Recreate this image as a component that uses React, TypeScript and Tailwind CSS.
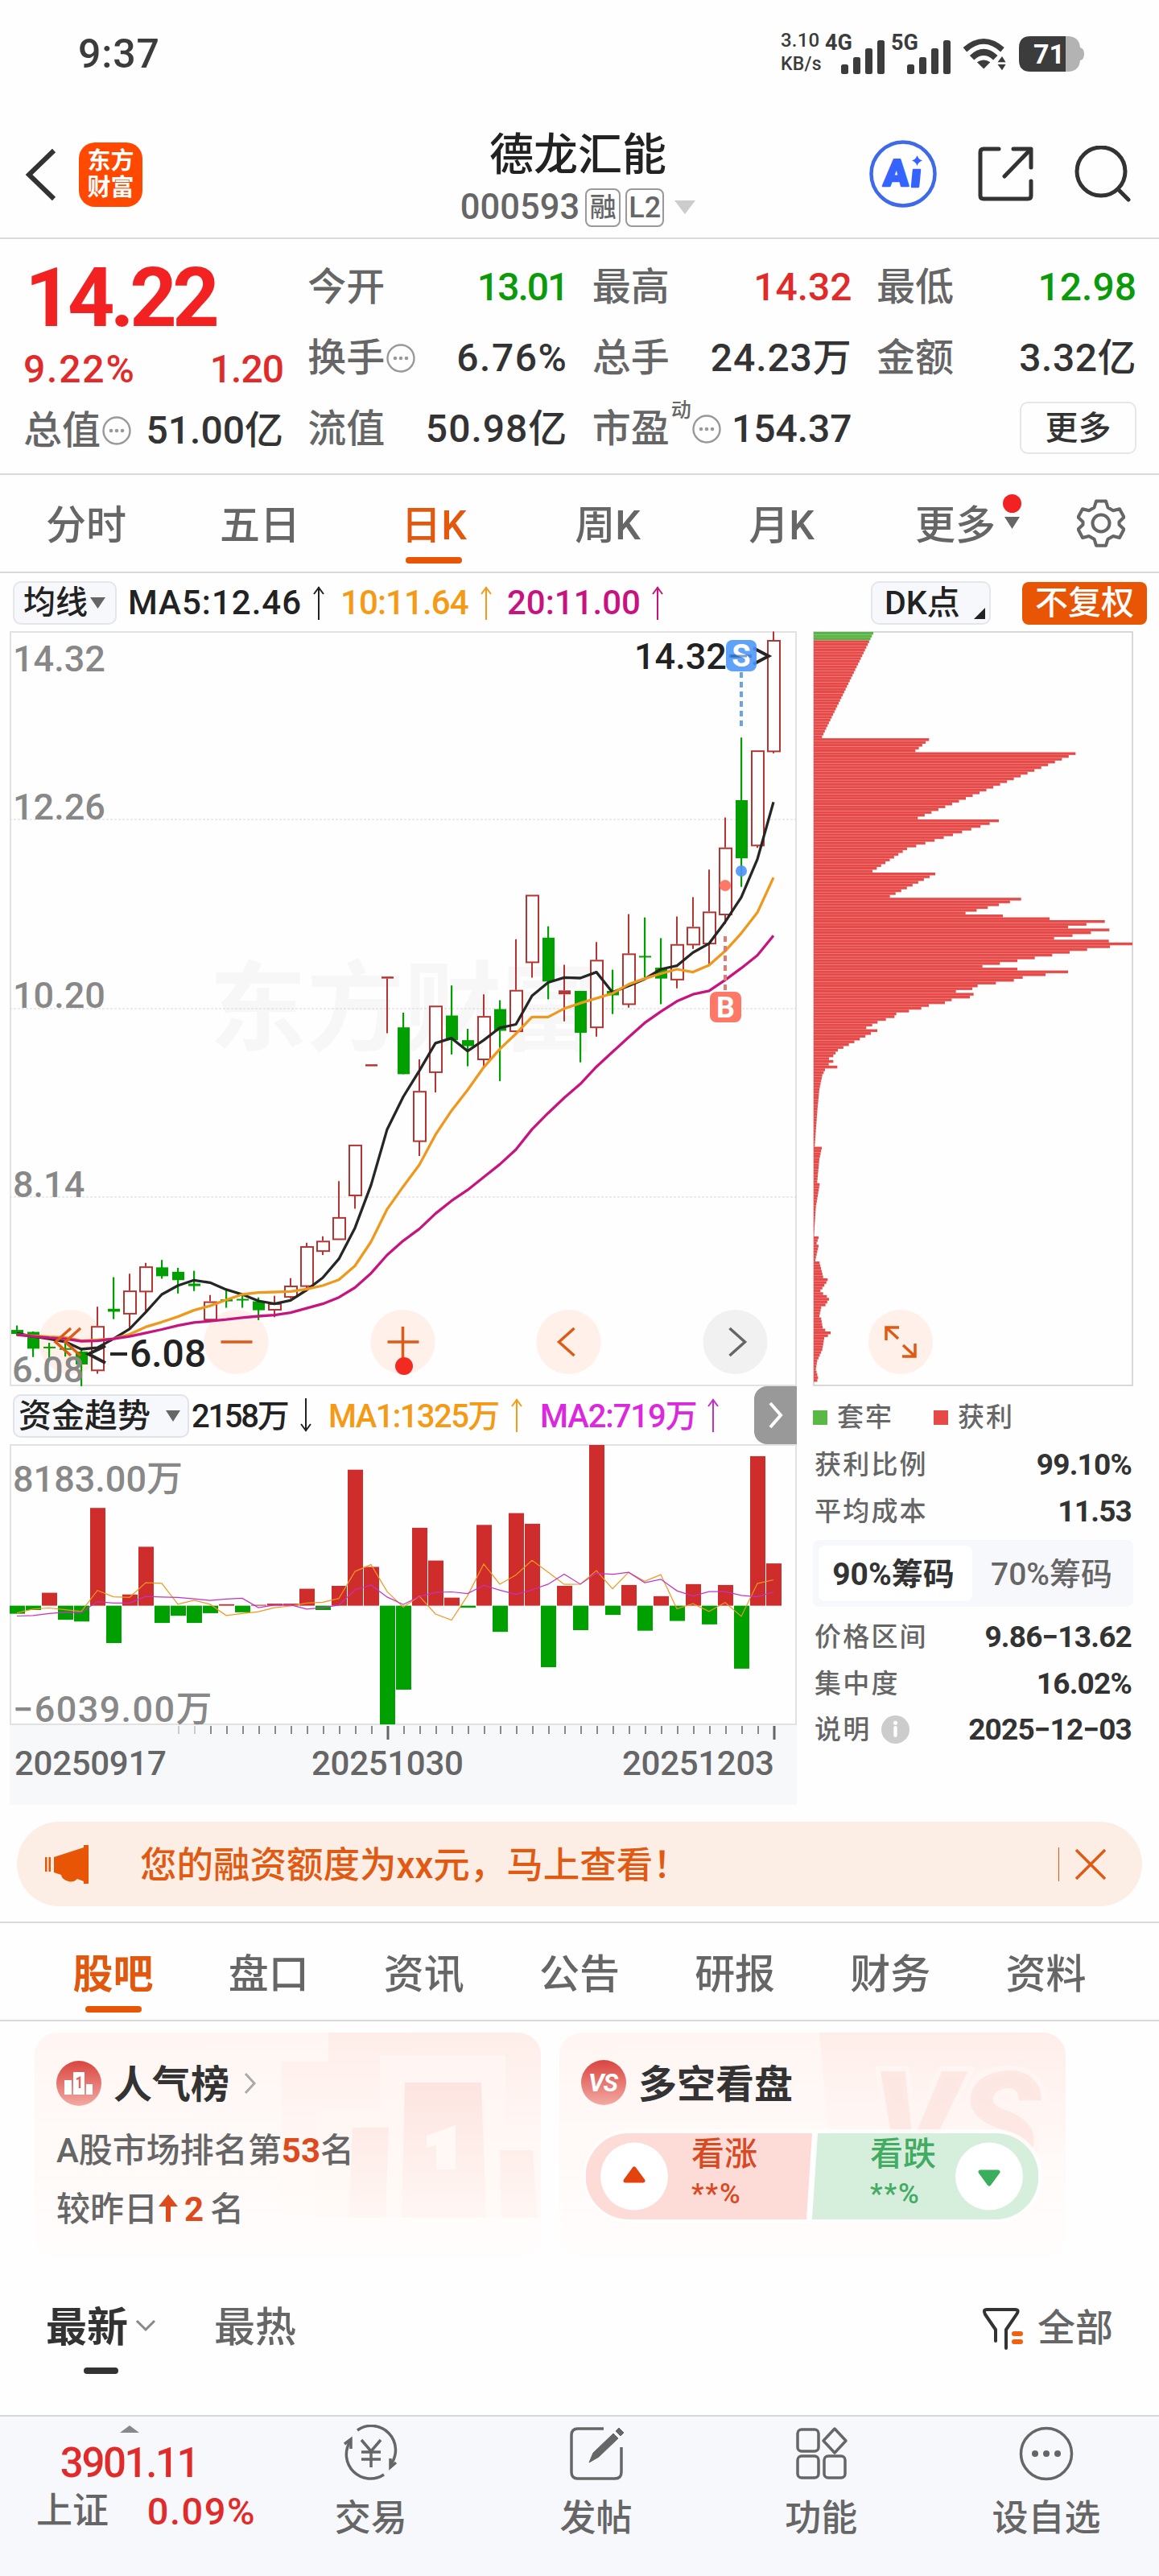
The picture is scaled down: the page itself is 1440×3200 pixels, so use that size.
import React from 'react';
import { clsx } from 'clsx';

type Candle = [dir: 'r' | 'g', high: number, top: number, bottom: number, low: number];

// vertical values are stored in raw plot units, 1531 units per price pane
const CANDLES: Candle[] = [
  ['g', 1415, 1424, 1432, 1436], ['g', 1427, 1428, 1462, 1479], ['g', 1450, 1458, 1461, 1485], ['g', 1450, 1461, 1464, 1478],
  ['g', 1462, 1468, 1494, 1538], ['r', 1377, 1416, 1506, 1513], ['g', 1317, 1381, 1387, 1402], ['r', 1310, 1344, 1391, 1420],
  ['r', 1288, 1295, 1346, 1388], ['g', 1282, 1297, 1315, 1320], ['g', 1298, 1306, 1323, 1350], ['g', 1304, 1330, 1335, 1345],
  ['r', 1353, 1366, 1403, 1405], ['g', 1344, 1362, 1366, 1379], ['g', 1350, 1361, 1364, 1379], ['g', 1358, 1366, 1384, 1404],
  ['r', 1355, 1370, 1383, 1398], ['r', 1319, 1334, 1357, 1360], ['r', 1247, 1254, 1335, 1340], ['r', 1234, 1243, 1264, 1272],
  ['r', 1122, 1195, 1240, 1241], ['r', 1048, 1048, 1151, 1178], ['r', 885, 885, 889, 889], ['r', 707, 707, 711, 822],
  ['g', 780, 810, 905, 905], ['r', 875, 939, 1041, 1071], ['r', 766, 766, 901, 942], ['g', 725, 786, 836, 865],
  ['g', 813, 836, 848, 889], ['r', 743, 787, 875, 890], ['g', 755, 773, 817, 919], ['r', 631, 734, 818, 818],
  ['r', 541, 541, 678, 709], ['g', 605, 628, 717, 753], ['r', 683, 735, 743, 798], ['g', 736, 736, 821, 881],
  ['r', 637, 673, 810, 829], ['g', 693, 736, 745, 783], ['r', 580, 660, 763, 770], ['g', 587, 665, 668, 710],
  ['g', 629, 689, 711, 763], ['r', 585, 641, 713, 731], ['r', 546, 606, 642, 651], ['r', 490, 575, 640, 686],
  ['r', 384, 445, 581, 600], ['g', 222, 349, 467, 525], ['r', 248, 248, 441, 446], ['r', 7, 24, 250, 254],
];

const MA5 = [1431, 1437, 1442, 1448, 1463, 1460, 1442, 1422, 1388, 1352, 1334, 1323, 1328, 1342, 1352, 1365, 1371, 1364, 1343, 1318, 1280, 1217, 1130, 1017, 951, 898, 842, 832, 858, 836, 811, 804, 746, 719, 709, 710, 698, 739, 726, 712, 692, 685, 658, 640, 596, 546, 469, 353];
const MA10 = [1434, 1436, 1438, 1439, 1446, 1444, 1442, 1433, 1418, 1408, 1397, 1384, 1375, 1363, 1352, 1348, 1347, 1346, 1341, 1334, 1322, 1294, 1245, 1179, 1133, 1089, 1028, 979, 937, 891, 854, 823, 789, 789, 772, 761, 751, 741, 723, 711, 701, 692, 698, 684, 655, 619, 577, 506];
const MA20 = [1434, 1437, 1440, 1442, 1447, 1446, 1442, 1437, 1430, 1423, 1415, 1409, 1406, 1403, 1399, 1396, 1394, 1389, 1380, 1371, 1358, 1338, 1309, 1272, 1243, 1219, 1188, 1162, 1140, 1114, 1088, 1058, 1017, 984, 953, 925, 890, 860, 830, 801, 778, 757, 743, 736, 714, 690, 664, 624];

// capital flow pane, zero line at 825
const FLOW = [853, 840, 780, 874, 880, 485, 955, 786, 620, 885, 860, 885, 851, 820, 848, 822, 818, 818, 766, 840, 756, 352, 690, 1238, 1117, 554, 668, 797, 832, 544, 916, 503, 540, 1039, 756, 910, 266, 857, 753, 912, 792, 878, 750, 890, 753, 1044, 305, 678];
const FLOW_MA1 = [850, 837, 833, 839, 845, 772, 794, 796, 745, 747, 820, 806, 820, 859, 852, 846, 832, 826, 816, 813, 800, 706, 682, 776, 830, 792, 854, 875, 790, 680, 750, 718, 667, 708, 751, 750, 703, 766, 709, 740, 717, 836, 818, 845, 814, 862, 748, 735];
const FLOW_MA2 = [861, 859, 852, 848, 849, 811, 816, 816, 793, 795, 796, 801, 807, 802, 799, 832, 823, 822, 837, 832, 823, 770, 753, 795, 821, 793, 779, 777, 783, 754, 771, 786, 770, 750, 715, 750, 712, 716, 709, 745, 733, 773, 791, 776, 776, 789, 794, 777];

// chip distribution outline: [y, bar end]
const CHIPS: [number, number][] = [
  [74, 314], [276, 123], [281, 522], [303, 471], [308, 1068], [435, 480], [439, 782], [489, 474], [494, 440], [538, 311],
  [543, 545], [588, 376], [592, 865], [620, 658], [625, 797], [630, 971], [635, 1177], [646, 1040], [652, 1194], [668, 988],
  [674, 1192], [679, 1280], [685, 1196], [691, 1111], [723, 721], [728, 851], [734, 1040], [739, 956], [745, 871], [750, 838],
  [756, 771], [761, 703], [767, 683], [772, 622], [777, 688], [783, 674], [789, 606], [794, 581], [799, 521], [805, 493],
  [810, 447], [816, 400], [821, 393], [827, 361], [832, 330], [838, 310], [843, 288], [848, 329], [854, 305], [887, 182],
  [898, 165], [903, 149], [908, 165], [914, 148], [919, 180], [925, 134], [935, 124], [960, 113], [1000, 106], [1072, 96],
  [1078, 122], [1100, 113], [1143, 105], [1148, 114], [1190, 100], [1248, 93], [1252, 110], [1263, 103], [1269, 110], [1296, 98],
  [1301, 114], [1329, 127], [1335, 144], [1340, 139], [1357, 117], [1362, 127], [1368, 141], [1373, 149], [1380, 136], [1390, 120],
  [1405, 113], [1410, 120], [1427, 125], [1433, 135], [1438, 155], [1444, 145], [1449, 131], [1470, 124], [1490, 105], [1510, 100],
  [1525, 108], [1533, 103],
];
const ROW_STEP = 5.45;

const chipRows = () => {
  const pts = CHIPS.map(([y, x]) => [Math.round((y - 74) / ROW_STEP), x]);
  const rows: number[] = [];
  for (let k = 0; k < pts.length - 1; k++) {
    const [i0, x0] = pts[k];
    const [i1, x1] = pts[k + 1];
    for (let i = i0; i < i1; i++) rows[i] = x0 + ((x1 - x0) * (i - i0)) / (i1 - i0);
  }
  return rows;
};

const cx = (i: number) => 9 + i * 20;
const py = (v: number) => (v - 6) * 0.6122;
const fy = (v: number) => (v - 266) / 2.8 + 1;
const line = (vals: number[], f: (v: number) => number) => vals.map((v, i) => `${cx(i)},${f(v).toFixed(1)}`).join(' ');

function Down({ className }: { className?: string }) {
  return (
    <svg viewBox="0 0 20 16" preserveAspectRatio="none" className={className} fill="currentColor">
      <path d="M0 0h20L10 16z" />
    </svg>
  );
}

function Arrow({ down, className }: { down?: boolean; className?: string }) {
  return (
    <svg viewBox="0 0 16 44" className={clsx('h-[44px] w-4 shrink-0', down && 'rotate-180', className)} fill="none" stroke="currentColor" strokeWidth="2">
      <path d="M8 2v41M2 11l6-8 6 8" />
    </svg>
  );
}

function Dots({ className }: { className?: string }) {
  return (
    <svg viewBox="0 0 36 36" className={clsx('h-9 w-9 shrink-0 text-[#999]', className)} fill="none" stroke="currentColor" strokeWidth="2.4">
      <circle cx="18" cy="18" r="16.5" />
      <g fill="currentColor" stroke="none">
        <circle cx="11" cy="18" r="2.3" />
        <circle cx="18" cy="18" r="2.3" />
        <circle cx="25" cy="18" r="2.3" />
      </g>
    </svg>
  );
}

function StatusBar() {
  const bars = [12, 21, 32, 42];
  return (
    <div className="flex h-[134px] items-center justify-between pl-[97px] pr-[92px] font-medium text-[#3c3c3c]">
      <div className="text-[50px] tracking-[0.8px]">9:37</div>
      <div className="flex items-center">
        <div className="w-[57px] pb-[5px] text-[24px] font-medium leading-[29px] tracking-[0.2px]">
          <div>3.10</div>
          <div className="text-[23px]">KB/s</div>
        </div>
        {['4G', '5G'].map(t => (
          <svg key={t} viewBox="0 0 73 54" className="mr-[9px] h-[54px] w-[73px] overflow-visible" fill="currentColor">
            <text x="-2" y="22" className="text-[27px] font-bold">{t}</text>
            {bars.map((h, b) => <rect key={h} x={18 + b * 15} y={52 - h} width="9" height={h} rx="2.500" />)}
          </svg>
        ))}
        <svg viewBox="0 0 60 46" className="ml-[3px] h-[46px] w-[60px] pt-1" fill="currentColor">
          <path d="M0 12Q28-12 56 12l-5 6Q28-3 5 18z" />
          <path d="M9 23q19-18 38 0l-6 6Q28 17 15 29z" />
          <path d="M28 41l-9-9q9-6 18 0z" />
          <path d="M47 32l6-8 5 8zM47 35h11l-5 8z" />
        </svg>
        <svg viewBox="0 0 82 44" className="ml-[12px] h-[44px] w-[82px]">
          <path d="M56 0h6q13 1 14 14 5 1 5 8t-5 8q-1 13-14 14h-6z" fill="#b3b3b3" />
          <path d="M14 0h44v44H14Q0 44 0 30V14Q0 0 14 0z" fill="#3c3c3c" />
          <text x="18" y="34" className="text-[34px] font-bold" fill="#fff">71</text>
        </svg>
      </div>
    </div>
  );
}

function Header() {
  return (
    <header className="grid h-[163px] grid-cols-[1fr_auto_1fr] items-center border-b-2 border-[#d9d9d9] pl-[31px] pr-[35px]">
      <div className="flex items-center gap-[27px] pt-1">
        <svg viewBox="0 0 40 66" className="h-[66px] w-10" fill="none" stroke="#333" strokeWidth="6">
          <path d="M36 3L5 33l31 30" />
        </svg>
        <div className="flex h-20 w-[79px] flex-col items-center justify-center rounded-[20px] bg-[#ff4800] text-[29px] font-bold leading-[33px] text-white">
          <span>东方</span>
          <span>财富</span>
        </div>
      </div>
      <div className="flex flex-col items-center pt-[18px]">
        <h1 className="text-[55px] font-medium leading-[68px] text-[#222]">德龙汇能</h1>
        <div className="flex h-[64px] items-center text-[43.500px] text-[#666]">
          <span>000593</span>
          <span className="ml-[7px] flex h-[48px] w-[44px] items-center justify-center rounded-lg border-2 border-[#999] text-[33px]">融</span>
          <span className="ml-[6px] flex h-[48px] w-[48px] items-center justify-center rounded-lg border-2 border-[#999] text-[36px]">L2</span>
          <Down className="ml-[13px] h-[17px] w-[26px] text-[#ccc]" />
        </div>
      </div>
      <div className="flex items-center justify-end pt-[2px]">
        <svg viewBox="0 0 84 84" className="h-[84px] w-[84px]">
          <circle cx="42" cy="42" r="39.500" fill="none" stroke="#3d69ea" strokeWidth="4.500" />
          <text transform="translate(17 57) skewX(-3)" className="text-[46px] font-black" fill="#3563ff" stroke="#3563ff" strokeWidth="2.500" strokeLinejoin="round">A</text>
          <path d="M55 37h8l-2 21h-8z" fill="#3563ff" stroke="#3563ff" strokeWidth="2.500" strokeLinejoin="round" />
          <path d="M59.500 19q1.500 5 6.500 6.500-5 1.500-6.500 6.500-1.500-5-6.500-6.500 5-1.500 6.500-6.500z" fill="#3563ff" />
        </svg>
        <svg viewBox="0 0 70 70" className="ml-[50px] h-[70px] w-[70px]" fill="none" stroke="#333" strokeWidth="5" strokeLinecap="round" strokeLinejoin="round">
          <path d="M27 4H8Q4 4 4 8v54q0 4 4 4h55q4 0 4-4V44M45 4h22v23M66 5L34 38" />
        </svg>
        <svg viewBox="0 0 70 70" className="ml-[51px] h-[70px] w-[70px]" fill="none" stroke="#333" strokeWidth="5" strokeLinecap="round">
          <circle cx="33" cy="32" r="30" />
          <path d="M55 55l12 12" />
        </svg>
      </div>
    </header>
  );
}

function Cell({ label, value, color = 'text-[#333]', dots, sup }: { label: string; value: string; color?: string; dots?: boolean; sup?: string }) {
  return (
    <div className="flex h-[88px] items-center text-[48px]">
      <span className="text-[#666]">{label}</span>
      {sup && <span className="-mr-[1px] mb-[48px] ml-[2px] text-[25px] text-[#666]">{sup}</span>}
      {dots && <Dots className="ml-[2px]" />}
      <span className={clsx('ml-auto', color)}>{value}</span>
    </div>
  );
}

function Quote() {
  return (
    <section className="flex h-[293px] justify-between border-b-2 border-[#d9d9d9] pl-[29px] pr-[28px] pt-[16px]">
      <div className="w-[323px]">
        <div className="-mt-1 h-[106px] whitespace-nowrap pl-[2px] text-[102px] font-bold leading-[122px] tracking-[-5.500px] text-[#f22222]">14.22</div>
        <div className="mt-1 flex h-[80px] items-center justify-between text-[48px] text-[#e02b2b]">
          <span className="tracking-[1.800px]">9.22%</span>
          <span className="tracking-[-1px]">1.20</span>
        </div>
        <div className="-mt-2"><Cell label="总值" value="51.00亿" dots /></div>
      </div>
      <div className="w-[323px]">
        <Cell label="今开" value="13.01" color="text-[#0a9a0a] tracking-[-2px]" />
        <Cell label="换手" value="6.76%" color="text-[#333] tracking-[1.500px]" dots />
        <Cell label="流值" value="50.98亿" color="text-[#333] tracking-[1px]" />
      </div>
      <div className="w-[323px]">
        <Cell label="最高" value="14.32" color="text-[#e02b2b]" />
        <Cell label="总手" value="24.23万" color="text-[#333] tracking-[0.900px]" />
        <Cell label="市盈" value="154.37" sup="动" dots />
      </div>
      <div className="w-[323px]">
        <Cell label="最低" value="12.98" color="text-[#0a9a0a]" />
        <Cell label="金额" value="3.32亿" color="text-[#333] tracking-[0.500px]" />
        <button className="ml-auto mt-[10px] flex h-[65px] w-[145px] items-center justify-center rounded-[10px] border-2 border-[#e6e6e6] pt-[2px] text-[41px] text-[#333]">更多</button>
      </div>
    </section>
  );
}

function PeriodTabs() {
  const tabs = ['分时', '五日', '日K', '周K', '月K', '更多'];
  return (
    <nav className="flex h-[122px] border-b-2 border-[#d9d9d9] text-[50px] text-[#666]">
      {tabs.map(t => (
        <div key={t} className={clsx('relative flex w-[216px] items-center justify-center pr-[2px] pt-[5px]', t === '日K' && 'text-[#e0590f]')}>
          {t}
          {t === '日K' && <span className="absolute bottom-[10px] h-[8px] w-[70px] rounded-full bg-[#e85505]" />}
          {t === '更多' && (
            <>
              <span className="absolute right-[27px] top-[24px] h-[23px] w-[23px] rounded-full bg-[#f22222]" />
              <Down className="absolute right-[29px] top-[52px] h-[15px] w-[19px]" />
            </>
          )}
        </div>
      ))}
      <div className="flex w-[144px] items-center justify-center">
        <svg viewBox="0 0 60 60" className="h-[60px] w-[60px]" fill="none" stroke="#666" strokeWidth="4">
          <path d="M24 2.500h12l2.500 8 6.500 3.700 8-2 5.500 10.300-6 5.700v3.600l6 5.700L53 48l-8-2-6.500 3.700-2.500 8H24l-2.500-8L15 46l-8 2-5.500-10.500 6-5.700v-3.600l-6-5.700L7 12.200l8 2 6.500-3.700z" strokeLinejoin="round" />
          <circle cx="30" cy="30" r="10.500" />
        </svg>
      </div>
    </nav>
  );
}

function MaRow() {
  return (
    <div className="flex h-[72px] items-center pl-[16px] pr-[15px] pt-[2px] text-[42px]">
      <div className="flex h-[54px] w-[129px] items-center gap-[3px] rounded-[10px] border-2 border-[#e4e6ea] bg-[#f7f8fb] pl-[11px] text-[40px] text-[#222]">
        均线
        <Down className="h-[14px] w-[19px] text-[#666]" />
      </div>
      <span className="ml-[14px] w-[214px] tracking-[1px] text-[#222]">MA5:12.46</span>
      <Arrow className="ml-[15px] text-[#222]" />
      <span className="ml-[19px] w-[159px] tracking-[-0.900px] text-[#f59a14]">10:11.64</span>
      <Arrow className="ml-[14px] text-[#f59a14]" />
      <span className="ml-[18px] w-[163px] text-[#c8127f]">20:11.00</span>
      <Arrow className="ml-[16px] text-[#c8127f]" />
      <div className="relative ml-auto flex h-[54px] w-[149px] items-center rounded-[10px] border-2 border-[#e4e6ea] bg-[#f7f8fb] pl-[15px] text-[41px] text-[#222]">
        DK点
        <svg viewBox="0 0 14 14" className="absolute bottom-[5px] right-[5px] h-[14px] w-[14px]"><path d="M14 0v14H0z" fill="#222" /></svg>
      </div>
      <div className="ml-[39px] flex h-[53px] w-[155px] items-center justify-center rounded-[8px] bg-[#e85505] text-[41px] text-white">不复权</div>
    </div>
  );
}

function RoundButton({ x, grey, children }: { x: number; grey?: boolean; children?: React.ReactNode }) {
  const color = grey ? '#666' : '#dd5a17';
  return (
    <g transform={`translate(${x} 883)`} fill="none" stroke={color} strokeWidth="3.500">
      <circle r="40" fill={grey ? '#f1f1f1' : '#ffe9dd'} fillOpacity={grey ? 1 : 0.65} stroke="none" />
      {children}
    </g>
  );
}

function PriceChart() {
  return (
    <svg viewBox="0 0 978 938" className="block h-[938px] w-[978px] overflow-visible text-[45px]">
      <text x="490" y="511" textAnchor="middle" className="text-[121px] font-bold" fill="#f7f7f7">东方财富</text>
      <rect x="1" y="1" width="976" height="936" fill="none" stroke="#e2e2e2" strokeWidth="2" />
      {[234, 469, 703].map(y => <line key={y} x1="0" x2="978" y1={y} y2={y} stroke="#d8d8d8" strokeDasharray="3 2" />)}

      {/* zoom and pan controls */}
      <RoundButton x={76} />
      <RoundButton x={281.500}><path d="M-19 0h39" /></RoundButton>
      <RoundButton x={488.500}><path d="M-19 0h39M0-19v39" /></RoundButton>
      <circle cx="490" cy="913" r="11" fill="#f22a22" />
      <RoundButton x={694.500}><path d="M7-17l-19 17L7 17" /></RoundButton>
      <RoundButton x={901.500} grey><path d="M-7-17l19 17L-7 17" /></RoundButton>

      {CANDLES.map(([dir, high, top, bottom, low], i) => {
        const x = cx(i);
        const h = py(bottom) - py(top);
        if (dir === 'g') {
          return (
            <g key={i} fill="#00a000">
              <rect x={x - 1} y={py(high)} width="2.200" height={py(low) - py(high)} />
              <rect x={x - 7} y={py(top)} width="15" height={Math.max(h, 2)} />
            </g>
          );
        }
        return (
          <g key={i} stroke="#b53532" strokeWidth="2" fill="none">
            <path d={`M${x} ${py(high)}V${py(top)}M${x} ${py(bottom)}V${py(low)}`} />
            {h < 6
              ? <rect x={x - 7} y={py(top)} width="15" height={h} fill="#b53532" stroke="none" />
              : <rect x={x - 7} y={py(top) + 1} width="15" height={h - 1} fill="#fff" />}
          </g>
        );
      })}
      <g fill="none" strokeWidth="3.300" strokeLinejoin="round">
        <polyline points={line(MA5, py)} stroke="#262626" />
        <polyline points={line(MA10, py)} stroke="#ef981e" />
        <polyline points={line(MA20, py)} stroke="#c6157f" />
      </g>
      <path d="M76 866l-19 17 19 17M88 866l-19 17 19 17" fill="none" stroke="#dd5a17" strokeWidth="3.500" />

      {/* axis labels */}
      <g fill="#888">
        <text x="4" y="50">14.32</text>
        <text x="4" y="234">12.26</text>
        <text x="4" y="468">10.20</text>
        <text x="4" y="703">8.14</text>
        <text x="3" y="933">6.08</text>
      </g>

      {/* high and low marks */}
      <g fill="#222">
        <text x="776" y="47">14.32</text>
        <text x="149" y="914" className="text-[48px]">6.08</text>
      </g>
      <g fill="none" stroke="#262626" strokeWidth="4">
        <path d="M125 898h21M119 888l-21 10 21 11" />
        <path d="M894 31h28M924 21l19 10-19 10" />
      </g>

      {/* trade marks */}
      <rect x="890" y="11" width="38" height="39" rx="8" fill="#4a94f8" fillOpacity=".88" />
      <text x="909" y="44" textAnchor="middle" className="text-[38px] font-bold" fill="#fff">S</text>
      <path d="M896 31h20" stroke="#2c5f9f" strokeOpacity=".6" strokeWidth="3" />
      <path d="M909 51v68" stroke="#6ba3e6" strokeWidth="4" strokeDasharray="7 5" />
      <circle cx="909" cy="298" r="7" fill="#4a94f8" fillOpacity=".9" />
      <circle cx="889" cy="316" r="7" fill="#fd7866" />
      <path d="M889 379v68" stroke="#df7c72" strokeWidth="4" strokeDasharray="7 5" />
      <rect x="870" y="448" width="39" height="38" rx="8" fill="#fd7866" />
      <text x="889.500" y="480" textAnchor="middle" className="text-[36px] font-bold" fill="#fff">B</text>
    </svg>
  );
}

function FlowChart() {
  const ticks = Array.from({ length: 38 }, (_, i) => 210 + i * 20);
  return (
    <>
      <svg viewBox="0 0 978 349" className="block h-[349px] w-[978px] overflow-visible text-[45px]">
        <rect x="1" y="1" width="976" height="347" fill="none" stroke="#e2e2e2" strokeWidth="2" />
        {FLOW.map((v, i) => (
          <rect key={i} x={cx(i) - 9} width="19" y={Math.min(fy(v), fy(825))} height={Math.abs(fy(v) - fy(825))} fill={v < 825 ? '#cf2c2c' : '#00a000'} />
        ))}
        <g fill="none" strokeWidth="1.200">
          <polyline points={line(FLOW_MA1, fy)} stroke="#ef981e" />
          <polyline points={line(FLOW_MA2, fy)} stroke="#c233c2" />
        </g>
        <g fill="#888">
          <text x="4" y="59">8183.00万</text>
          <text x="4" y="345" className="tracking-[1.400px]">−6039.00万</text>
        </g>
      </svg>
      <div className="h-[99px] bg-[#f7f8fa]">
        <svg viewBox="0 0 978 20" className="block h-5 w-[978px]" stroke="#666">
          {ticks.map((x, i) => <line key={x} x1={x} x2={x} y1="1" y2={i === 13 || i === 37 ? 18 : 11} strokeWidth={i === 13 || i === 37 ? 3 : 1.5} strokeOpacity={i < 2 ? 0.4 : 1} />)}
        </svg>
        <div className="flex h-[56px] items-center pl-[6px] text-[42px] tracking-[-0.300px] text-[#666]">
          <span className="w-[369px]">20250917</span>
          <span className="w-[386px]">20251030</span>
          <span>20251203</span>
        </div>
      </div>
    </>
  );
}

function IndicatorRow() {
  return (
    <div className="flex h-[72px] items-center pl-[4px] text-[40px]">
      <div className="mt-[2px] flex h-[54px] w-[219px] items-center justify-between rounded-[10px] border-2 border-[#e0e3e8] bg-[#f7f8fb] pl-[5px] pr-[9px] text-[41px] text-[#222]">
        资金趋势
        <Down className="h-[14px] w-[18px] text-[#666]" />
      </div>
      <span className="ml-[3px] w-[122px] whitespace-nowrap pt-[3px] tracking-[-2.300px] text-[#222]">2158万</span>
      <Arrow down className="ml-[12px] text-[#222]" />
      <span className="ml-[20px] w-[212px] whitespace-nowrap pt-[3px] tracking-[-1.600px] text-[#f59a14]">MA1:1325万</span>
      <Arrow className="ml-[14px] text-[#f59a14]" />
      <span className="ml-[21px] w-[195px] whitespace-nowrap pt-[3px] tracking-[-1.100px] text-[#dc28dc]">MA2:719万</span>
      <Arrow className="ml-[12px] text-[#c62fc6]" />
      <div className="ml-auto flex h-full w-[53px] items-center justify-center rounded-l-[16px] bg-[#999]">
        <svg viewBox="0 0 18 34" className="h-[34px] w-[18px]" fill="none" stroke="#fff" strokeWidth="4"><path d="M2 2l13 15L2 32" /></svg>
      </div>
    </div>
  );
}

function StatRow({ label, value, info }: { label: string; value: string; info?: boolean }) {
  return (
    <div className="flex h-[57.500px] items-center pl-[2px]">
      <span className="text-[33px] tracking-[2.200px] text-[#666]">{label}</span>
      {info && (
        <svg viewBox="0 0 36 36" className="ml-[13px] h-[35px] w-[35px]">
          <circle cx="18" cy="18" r="18" fill="#ccc" />
          <path d="M18 15.500v10" stroke="#fff" strokeWidth="4.500" strokeLinecap="round" />
          <circle cx="18" cy="9.500" r="2.600" fill="#fff" />
        </svg>
      )}
      <span className="ml-auto pr-[2px] text-[37px] font-bold tracking-[-0.800px] text-[#333]">{value}</span>
    </div>
  );
}

function ChipPanel() {
  return (
    <div className="ml-[20px] w-[398px]">
      <svg viewBox="0 0 398 938" className="block h-[938px] w-[398px]">
        <rect x="1" y="1" width="396" height="936" fill="none" stroke="#ccc" strokeWidth="1.500" />
        <g transform="translate(1 1) scale(.33333 .6378)">
          {chipRows().map((x, i) => (
            <g key={i}>
              <rect x="0" y={i * ROW_STEP} width={x - 92} height="5.450" fill={i < 3 ? '#58b446' : '#e64a48'} />
              <rect x="0" y={i * ROW_STEP + 4.600} width={x - 92} height=".85" fill="#fff" fillOpacity=".22" />
            </g>
          ))}
        </g>
        <g transform="translate(109 883)" fill="none" stroke="#e05a14" strokeWidth="3.500">
          <circle r="40" fill="#fff1e9" stroke="none" />
          <path d="M-2-18h-16v16M-18-18l15 14M2 18h16V2M18 18L3 4" />
        </g>
      </svg>
      <div className="flex h-[69px] items-center pt-[8px] text-[33px] tracking-[2px] text-[#666]">
        <span className="mr-[12px] h-[18px] w-[18px] bg-[#5ab845]" />套牢
        <span className="ml-[50px] mr-[12px] h-[18px] w-[18px] bg-[#e64a48]" />获利
      </div>
      <StatRow label="获利比例" value="99.10%" />
      <StatRow label="平均成本" value="11.53" />
      <div className="mb-[9px] mt-[7px] flex h-[83px] rounded-[8px] bg-[#f7f8fb] p-[7px] text-[39px]">
        <span className="flex w-[191px] items-center justify-center rounded-[8px] bg-white pr-[5px] pt-[3px] font-bold text-[#333]">90%筹码</span>
        <span className="flex flex-1 items-center justify-center pl-[4px] pt-[3px] text-[#666]">70%筹码</span>
      </div>
      <StatRow label="价格区间" value="9.86−13.62" />
      <StatRow label="集中度" value="16.02%" />
      <StatRow label="说明" value="2025−12−03" info />
    </div>
  );
}

function Banner() {
  return (
    <div className="ml-[21px] mt-[21px] flex h-[105px] w-[1398px] shrink-0 items-center rounded-full bg-[#fceee5] pl-[35px] text-[#e05a14]">
      <svg viewBox="0 0 54 48" className="h-[48px] w-[54px]" fill="#e85505">
        <path d="M0 15h2.500v18H0zM4.500 15h2.500v18H4.500zM11 15L48 3V0h6v48h-6v-3l-8-3q-5 5-11 3-8-2-9-8l-9-3z" />
      </svg>
      <span className="ml-[64px] pt-[4px] text-[45.500px]">您的融资额度为xx元，马上查看！</span>
      <div className="ml-auto mr-[45px] flex items-center gap-[20px]">
        <span className="h-[42px] w-px bg-[#e05a14]" />
        <svg viewBox="0 0 38 38" className="h-[38px] w-[38px]" fill="none" stroke="currentColor" strokeWidth="3.500"><path d="M1 1l36 36M37 1L1 37" /></svg>
      </div>
    </div>
  );
}

function SectionTabs() {
  return (
    <nav className="mt-[19px] flex h-[124px] shrink-0 border-y-2 border-[#d9d9d9] px-[44px] text-[50px] text-[#666]">
      {['股吧', '盘口', '资讯', '公告', '研报', '财务', '资料'].map((t, i) => (
        <div key={t} className={clsx('relative flex w-[193.200px] items-center justify-center pt-[8px]', i === 0 && 'font-bold text-[#e0590f]')}>
          {t}
          {i === 0 && <span className="absolute bottom-[9px] h-[8px] w-[70px] rounded-full bg-[#e85505]" />}
        </div>
      ))}
    </nav>
  );
}

function Cards() {
  return (
    <div className="mt-[14px] flex h-[279px] shrink-0 gap-[23px] pl-[43px] text-[#666]">
      <div className="relative w-[629px] overflow-hidden rounded-[28px] bg-gradient-to-b from-[#fff6f3] to-[#fffdfc] pl-[27px]">
        <svg viewBox="0 0 629 279" className="absolute inset-0 h-full w-full">
          <defs>
            <linearGradient id="fade" x1="0" y1="0" x2="0" y2="1">
              <stop offset="0" stopColor="#fbdad6" stopOpacity=".65" />
              <stop offset="1" stopColor="#fff3ef" stopOpacity=".5" />
            </linearGradient>
            <linearGradient id="halo" x1="0" y1="0" x2="0" y2="1">
              <stop offset="0" stopColor="#feeae6" stopOpacity=".7" />
              <stop offset=".85" stopColor="#fff6f3" stopOpacity="0" />
            </linearGradient>
            <linearGradient id="badge" x1="0" y1="0" x2="0" y2="1">
              <stop offset="0" stopColor="#d9453f" />
              <stop offset="1" stopColor="#f3a9a3" />
            </linearGradient>
          </defs>
          <path d="M307 36h58V0h264v279H307z" fill="url(#halo)" />
          <path d="M349 96h80V28h156v88h44v114H349z" fill="#fff8f5" fillOpacity=".6" />
          <path d="M395 118h45l-4 112h-46zM460 62h95l6 168H456zM578 146h41l5 84h-44z" fill="url(#fade)" />
          <path d="M487 128l36-13v55h-24v-30l-12 3z" fill="#fff8f5" />
          <path d="M499 138h24v32h-24z" fill="#fff8f5" />
        </svg>
        <div className="relative">
          <div className="flex h-[126px] items-center">
            <svg viewBox="0 0 56 56" className="h-[56px] w-[56px]">
              <circle cx="28" cy="28" r="28" fill="url(#badge)" />
              <path d="M10 24h9v18h-9zM21 14h14v28H21zM37 29h8v13h-8z" fill="#fff" />
              <path d="M25 23l4-2v13" fill="none" stroke="#e0635d" strokeWidth="2.500" />
            </svg>
            <span className="ml-[15px] pt-[4px] text-[48px] font-bold text-[#333]">人气榜</span>
            <svg viewBox="0 0 16 28" className="ml-[18px] h-[28px] w-4" fill="none" stroke="#aaa" strokeWidth="3"><path d="M2 2l11 12L2 26" /></svg>
          </div>
          <div className="flex h-[40px] items-center whitespace-nowrap pt-[2px] text-[42px]">
            A股市场排名第<b className="text-[#dd4a1c]">53</b>名
          </div>
          <div className="mt-[17px] flex h-[74px] items-center text-[42px]">
            较昨日
            <svg viewBox="0 0 24 34" className="mx-[1px] mb-[4px] h-[34px] w-6" fill="#dd4a1c"><path d="M12 0l12 15h-9v19H9V15H0z" /></svg>
            <b className="ml-[7px] mr-[8px] text-[#dd4a1c]">2</b>名
          </div>
        </div>
      </div>
      <div className="relative w-[629px] overflow-hidden rounded-[28px] bg-gradient-to-b from-[#fff6f3] to-[#fffdfc] pl-[27px]">
        <svg viewBox="0 0 629 279" className="absolute inset-0 h-full w-full">
          <path d="M323 0h306v236H345z" fill="url(#halo)" />
          <text x="388" y="168" className="text-[168px] font-black italic" fill="#fce3df" fillOpacity=".75" stroke="#fff6f3" strokeWidth="12" paintOrder="stroke">VS</text>
        </svg>
        <div className="relative">
          <div className="flex h-[120px] items-center pt-1">
            <svg viewBox="0 0 56 56" className="h-[56px] w-[56px]">
              <circle cx="28" cy="28" r="28" fill="url(#badge)" />
              <text x="27" y="39" textAnchor="middle" className="text-[31px] font-bold italic tracking-[-1px]" fill="#fff">VS</text>
            </svg>
            <span className="ml-[15px] pt-[5px] text-[48px] font-bold text-[#333]">多空看盘</span>
          </div>
          <div className="relative ml-[3px] flex h-[116px] w-[570px] items-center rounded-full bg-white/80 p-[5px]">
            <svg viewBox="0 0 562 107" className="absolute left-[3px] top-[5px] h-[107px] w-[562px]">
              <path d="M53 0h228l-7 107H53a53.500 53.500 0 0 1 0-107z" fill="#fddcd8" />
              <path d="M288 0h221a53.500 53.500 0 0 1 0 107H281z" fill="#d5efdc" />
              <circle cx="60" cy="53.500" r="42" fill="#fff" />
              <circle cx="501" cy="53.500" r="42" fill="#fff" />
              <path d="M60 44l11 15H49z" fill="#e2430f" stroke="#e2430f" strokeWidth="5" strokeLinejoin="round" />
              <path d="M501 63l11-15h-22z" fill="#3aae5c" stroke="#3aae5c" strokeWidth="5" strokeLinejoin="round" />
            </svg>
            <div className="relative -mt-[4px] ml-[129px] w-[222px] text-[#d84a22]">
              <div className="text-[41px] leading-[50px]">看涨</div>
              <div className="text-[35px] leading-[50px] tracking-[2px]">**%</div>
            </div>
            <div className="relative -mt-[4px] text-[#43ab62]">
              <div className="text-[41px] leading-[50px]">看跌</div>
              <div className="text-[35px] leading-[50px] tracking-[2px]">**%</div>
            </div>
          </div>
        </div>
      </div>
    </div>
  );
}

function FeedTabs() {
  return (
    <div className="flex h-[196px] shrink-0 items-start pl-[57px] pr-[57px] pt-[62px] text-[51px] leading-[52px]">
      <div className="relative font-bold text-[#333]">
        最新
        <span className="absolute left-[47px] top-[75px] h-[8px] w-[43px] rounded-full bg-[#333]" />
      </div>
      <svg viewBox="0 0 26 16" className="ml-[9px] mt-[15px] h-[16px] w-[26px]" fill="none" stroke="#888" strokeWidth="3"><path d="M2 2l11 11L24 2" /></svg>
      <div className="ml-[72px] text-[#666]">最热</div>
      <svg viewBox="0 0 52 54" className="ml-auto h-[54px] w-[52px]" fill="none" stroke="#333" strokeWidth="4" strokeLinecap="round" strokeLinejoin="round">
        <path d="M17 42V28L4 9Q1 3 6 3h35q6 0 2 6L30 28v23" />
        <path d="M40 33h8M40 43h8" stroke="#f0600f" strokeWidth="6" />
      </svg>
      <div className="ml-[17px] text-[47px] text-[#666]">全部</div>
    </div>
  );
}

function BottomBar() {
  const items = [
    { label: '交易', icon: <><path d="M19 7a30 30 0 0 1 41 43M52 62A30 30 0 0 1 10 21" /><path d="M3 24l8-6v12M67 47l-7 6V42" /><path d="M24 19l12 14 12-14M36 33v20M24 34h24M24 43h24" /></> },
    { label: '发帖', icon: <><path d="M45 5H13q-8 0-8 8v46q0 8 8 8h46q8 0 8-8V28" /><path d="M27 47l5-12L57 11l6 6-24 23zM60 8l4-4 6 6-4 4z" fill="currentColor" strokeWidth="1" /></> },
    { label: '功能', icon: <><rect x="7" y="6" width="26" height="27" rx="5" /><rect x="7" y="39" width="26" height="27" rx="5" /><rect x="40" y="39" width="26" height="27" rx="5" /><path d="M53 5l14 15-14 15-14-15z" strokeLinejoin="round" /></> },
    { label: '设自选', icon: <><circle cx="36" cy="36" r="31.500" /><g fill="currentColor" stroke="none"><circle cx="22" cy="36" r="4" /><circle cx="36" cy="36" r="4" /><circle cx="50" cy="36" r="4" /></g></> },
  ];
  return (
    <footer className="flex h-[200px] shrink-0 border-t-2 border-[#d5d7da] bg-[#f7f8fb]">
      <div className="flex w-[321px] flex-col items-center">
        <Down className="mt-[11px] h-[9px] w-[24px] rotate-180 text-[#888]" />
        <div className="mt-[8px] text-[51px] leading-[60px] tracking-[-2.400px] text-[#e02b2b]">3901.11</div>
        <div className="flex w-full items-center justify-between pl-[45px] pr-[3px] text-[45px] leading-[60px] text-[#666]">
          上证
          <span className="text-[47px] tracking-[1.500px] text-[#e02b2b]">0.09%</span>
        </div>
      </div>
      {items.map(it => (
        <div key={it.label} className="flex w-[279.700px] flex-col items-center pt-[10px] text-[#666]">
          <svg viewBox="0 0 72 72" className="h-[72px] w-[72px]" fill="none" stroke="currentColor" strokeWidth="3.500">{it.icon}</svg>
          <span className="mt-[15px] text-[45px] leading-[60px]">{it.label}</span>
        </div>
      ))}
    </footer>
  );
}

export default function App() {
  return (
    <div className="flex h-[3200px] w-[1440px] flex-col overflow-hidden bg-[#fefefe] font-['Roboto','Noto_Sans_CJK_SC',sans-serif] font-medium leading-none">
      <StatusBar />
      <Header />
      <Quote />
      <PeriodTabs />
      <MaRow />
      <main className="flex h-[1458px] shrink-0 pl-3">
        <div className="w-[978px]">
          <PriceChart />
          <IndicatorRow />
          <FlowChart />
        </div>
        <ChipPanel />
      </main>
      <Banner />
      <SectionTabs />
      <Cards />
      <FeedTabs />
      <BottomBar />
    </div>
  );
}
